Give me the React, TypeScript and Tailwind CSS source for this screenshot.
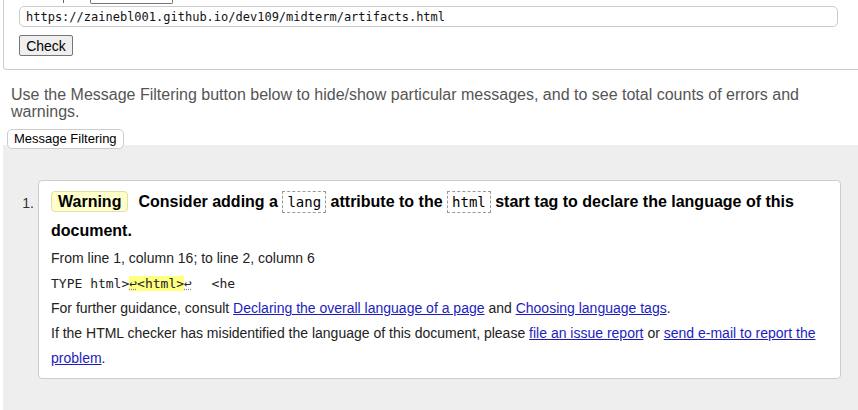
export default function App() {
  return (
    <div className="w-[858px] h-[410px] overflow-hidden bg-white font-['Liberation_Sans',Arial,sans-serif] text-black">
      {/* Address form */}
      <div className="ml-[3px] h-[70px] border-l border-b border-[#ccc] rounded-bl-[4px] pl-[15px]">
        <div className="flex h-[4px] items-start">
          <div className="ml-[44px] mt-0 h-[3px] w-px bg-[#666]" />
          <div className="ml-[26px] h-[4px] w-[83px] border-x border-b border-[#767676] rounded-b-[2px]" />
        </div>
        <div className="mt-[2px] flex h-[21px] w-[819px] items-center rounded-[5px] border border-[#ccc] px-[6px] font-['DejaVu_Sans_Mono',monospace] text-[12px] text-[#111]">
          https://zainebl001.github.io/dev109/midterm/artifacts.html
        </div>
        <button className="mt-[8px] h-[21px] w-[54px] rounded-[2px] border border-[#767676] bg-[#efefef] text-[14px] leading-none text-black">
          Check
        </button>
      </div>

      {/* Intro */}
      <p className="mt-[16px] px-[11px] text-[16px] leading-[17px] text-[#555]">
        Use the Message Filtering button below to hide/show particular messages, and to see total counts of errors and
        warnings.
      </p>
      <div className="relative z-10 mt-[6px] ml-[7px]">
        <button className="h-[20px] rounded-[5px] border border-[#ccc] bg-white px-[6px] text-[13px] leading-none text-black">
          Message Filtering
        </button>
      </div>

      {/* Results */}
      <div className="-mt-[5px] ml-[3px] h-[300px] bg-[#eee] pt-[35px]">
        <div className="flex">
          <div className="w-[35px] pr-[4px] pt-[11px] text-right text-[14px] leading-[25px] text-[#333]">1.</div>
          <div className="w-[803px] rounded-[4px] border border-[#ccc] bg-white px-[12px] pt-[6px] pb-[7px]">
            <p className="mb-[1px] text-[16px] font-bold leading-[29px]">
              <span className="rounded-[4px] border border-[#e3dfa8] bg-[#ffffcc] px-[6px] py-[1px]">Warning</span>
              <span className="ml-[10px]">Consider adding a </span>
              <code className="border border-dashed border-[#999] px-[4px] py-[2px] align-baseline font-['DejaVu_Sans_Mono',monospace] text-[14px] font-normal leading-none">lang</code>
              <span> attribute to the </span>
              <code className="border border-dashed border-[#999] px-[4px] py-[2px] align-baseline font-['DejaVu_Sans_Mono',monospace] text-[14px] font-normal leading-none">html</code>
              <span> start tag to declare the language of this document.</span>
            </p>
            <div className="text-[14px] leading-[25px] text-[#222]">
              <p>From line 1, column 16; to line 2, column 6</p>
              <p className="font-['DejaVu_Sans_Mono',monospace] text-[13px] whitespace-pre">
                TYPE html&gt;<span className="bg-[#ffff80]"><span className="underline decoration-dotted decoration-[#888]">↩</span>&lt;html&gt;</span><span className="underline decoration-dotted decoration-[#888]">↩</span><span className="inline-block w-[4px]" />{'  '}&lt;he
              </p>
              <p>
                For further guidance, consult{' '}
                <a className="text-[#1d1dbd] underline">Declaring the overall language of a page</a> and{' '}
                <a className="text-[#1d1dbd] underline">Choosing language tags</a>.
              </p>
              <p>
                If the HTML checker has misidentified the language of this document, please{' '}
                <a className="text-[#1d1dbd] underline">file an issue report</a> or{' '}
                <a className="text-[#1d1dbd] underline">send e-mail to report the problem</a>.
              </p>
            </div>
          </div>
        </div>
      </div>
    </div>
  );
}
